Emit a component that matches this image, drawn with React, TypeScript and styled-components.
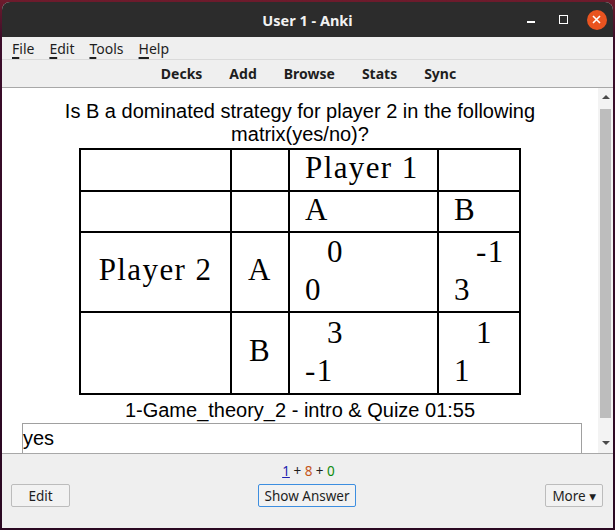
import React, { FC } from 'react';
import styled, { createGlobalStyle } from 'styled-components';

const GlobalStyle = createGlobalStyle`
	html,
	body {
		margin: 0;
		padding: 0;
		background: linear-gradient(180deg, #6e1b2c 0px, #3b0d2a 40px, #2a0822 100%);
		height: 530px;
		overflow: hidden;
	}
`;

const uiFont = `'Noto Sans', 'DejaVu Sans', sans-serif`;
const cardFont = `'Liberation Sans', Arial, sans-serif`;
const texFont = `'Liberation Serif', 'Times New Roman', serif`;

const Window = styled.div`
	width: 611px;
	height: 526px;
	margin: 2px 0 0 2px;
	border-radius: 8px 8px 0 0;
	overflow: hidden;
	display: flex;
	flex-direction: column;
	background: #efefef;
	font-family: ${uiFont};
`;

const TitleBar = styled.div`
	height: 35px;
	flex: none;
	background: #2c2c2c;
	display: grid;
	grid-template-columns: 1fr auto 1fr;
	align-items: center;
`;

const Title = styled.div`
	grid-column: 2;
	color: #f2f2f2;
	font-weight: bold;
	font-size: 14.5px;
	padding-top: 1px;
`;

const Controls = styled.div`
	justify-self: end;
	display: flex;
	align-items: center;
	padding-right: 0;
`;

const ControlSlot = styled.div`
	width: 33px;
	height: 24px;
	display: flex;
	align-items: center;
	justify-content: center;
`;

const Minimize = styled.div`
	width: 8px;
	height: 1.5px;
	background: #ffffff;
	margin-top: 5px;
`;

const Maximize = styled.div`
	width: 7px;
	height: 7px;
	border: 1.5px solid #ffffff;
`;

const Close = styled.div`
	width: 20px;
	height: 20px;
	border-radius: 50%;
	background: #e95420;
	display: flex;
	align-items: center;
	justify-content: center;
`;

const MenuBar = styled.div`
	height: 22px;
	flex: none;
	display: flex;
	align-items: center;
	gap: 15px;
	padding-left: 10px;
	font-size: 14px;
	color: #1e1e1e;
	border-bottom: 1px solid #dadada;
`;

const MenuItem = styled.span`
	& u {
		text-decoration-thickness: 2px;
		text-underline-offset: 3px;
	}
`;

const Toolbar = styled.div`
	height: 27px;
	flex: none;
	display: flex;
	align-items: center;
	justify-content: center;
	gap: 27px;
	padding-left: 2px;
	font-size: 14px;
	font-weight: bold;
	color: #1e1e1e;
	border-bottom: 1px solid #a8a8a8;
`;

const WebView = styled.div`
	flex: 1;
	display: flex;
	min-height: 0;
	background: #ffffff;
`;

const Card = styled.div`
	flex: 1;
	overflow: hidden;
	padding-top: 12px;
	font-family: ${cardFont};
	font-size: 20px;
	color: #000000;
	text-align: center;
`;

const Question = styled.div`
	line-height: 23px;
	max-width: 500px;
	margin: 0 auto;
`;

const Matrix = styled.div`
	display: grid;
	grid-template-columns: 149px 56px 147px 80px;
	grid-template-rows: 40px 39px 78px 80px;
	gap: 2px;
	padding: 2px;
	width: max-content;
	margin: 2px auto 0;
	background: #000000;
	font-family: ${texFont};
	font-size: 31px;
	letter-spacing: 1.4px;
	text-align: left;
`;

const Cell = styled.div<{ $center?: boolean }>`
	background: #ffffff;
	display: flex;
	align-items: center;
	justify-content: ${({ $center }) => ($center ? 'center' : 'flex-start')};
	padding-left: ${({ $center }) => ($center ? '0' : '15px')};
	padding-bottom: 4px;
	line-height: 34px;
`;

const PayoffCell = styled.div`
	background: #ffffff;
	display: flex;
	flex-direction: column;
	justify-content: center;
	padding-left: 15px;
	padding-bottom: 2px;
	line-height: 38px;
`;

const PayoffTop = styled.span`
	padding-left: 22px;
`;

const Caption = styled.div`
	margin-top: 4px;
	line-height: 23px;
`;

const AnswerInput = styled.div`
	margin: 1px 0 0 20px;
	width: 558px;
	height: 32px;
	border: 1px solid #a0a0a0;
	text-align: left;
	padding-left: 0;
	line-height: 28px;
`;

const Scrollbar = styled.div`
	width: 15px;
	flex: none;
	background: #f3f3f3;
	display: flex;
	flex-direction: column;
	align-items: center;
`;

const Arrow = styled.div<{ $down?: boolean }>`
	width: 0;
	height: 0;
	border-left: 4px solid transparent;
	border-right: 4px solid transparent;
	${({ $down }) =>
		$down ? 'border-top: 4px solid #4a4a4a;' : 'border-bottom: 4px solid #4a4a4a;'}
	margin: ${({ $down }) => ($down ? '0 0 8px' : '7px 0 0')};
`;

const Thumb = styled.div`
	width: 11px;
	margin: 10px 0 auto;
	height: 309px;
	background: #bdbdbd;
`;

const BottomBar = styled.div`
	height: 74px;
	flex: none;
	border-top: 1px solid #a8a8a8;
	display: flex;
	flex-direction: column;
	font-size: 13px;
	color: #1e1e1e;
`;

const Stats = styled.div`
	text-align: center;
	padding-top: 8px;
	line-height: 18px;
	font-size: 13.5px;
	padding-left: 2px;
`;

const Count = styled.span<{ $color: string; $underline?: boolean }>`
	color: ${({ $color }) => $color};
	text-decoration: ${({ $underline }) => ($underline ? 'underline' : 'none')};
`;

const ButtonRow = styled.div`
	display: grid;
	grid-template-columns: 1fr auto 1fr;
	align-items: center;
	padding: 0 10px 0 9px;
	margin-top: 4px;
`;

const Button = styled.div<{ $primary?: boolean; $align?: string; $pad?: number }>`
	justify-self: ${({ $align }) => $align || 'center'};
	height: 21px;
	padding: 0 ${({ $pad }) => $pad ?? 9}px;
	min-width: ${({ $primary }) => ($primary ? '0' : '39px')};
	display: flex;
	align-items: center;
	justify-content: center;
	border: 1px solid ${({ $primary }) => ($primary ? '#3d8ee0' : '#bcbcbc')};
	border-radius: 2px;
	background: #f2f2f2;
	font-size: 13.5px;
	color: #1e1e1e;
`;

const menus = [
	['F', 'ile'],
	['E', 'dit'],
	['T', 'ools'],
	['H', 'elp'],
];

const tools = ['Decks', 'Add', 'Browse', 'Stats', 'Sync'];

const App: FC = () => {
	return (
		<>
			<GlobalStyle />
			<Window>
				<TitleBar>
					<Title>User 1 - Anki</Title>
					<Controls>
						<ControlSlot>
							<Minimize />
						</ControlSlot>
						<ControlSlot>
							<Maximize />
						</ControlSlot>
						<ControlSlot>
							<Close>
								<svg width="9" height="9" viewBox="0 0 9 9">
									<path d="M1 1 L8 8 M8 1 L1 8" stroke="#fff" strokeWidth="1.6" />
								</svg>
							</Close>
						</ControlSlot>
					</Controls>
				</TitleBar>
				<MenuBar>
					{menus.map(([key, rest]) => (
						<MenuItem key={key}>
							<u>{key}</u>
							{rest}
						</MenuItem>
					))}
				</MenuBar>
				<Toolbar>
					{tools.map((t) => (
						<span key={t}>{t}</span>
					))}
				</Toolbar>
				<WebView>
					<Card>
						<Question>Is B a dominated strategy for player 2 in the following matrix(yes/no)?</Question>
						<Matrix>
							<Cell />
							<Cell />
							<Cell>Player 1</Cell>
							<Cell />

							<Cell />
							<Cell />
							<Cell>A</Cell>
							<Cell>B</Cell>

							<Cell $center>Player 2</Cell>
							<Cell $center>A</Cell>
							<PayoffCell>
								<PayoffTop>0</PayoffTop>
								<span>0</span>
							</PayoffCell>
							<PayoffCell>
								<PayoffTop>-1</PayoffTop>
								<span>3</span>
							</PayoffCell>

							<Cell />
							<Cell $center>B</Cell>
							<PayoffCell>
								<PayoffTop>3</PayoffTop>
								<span>-1</span>
							</PayoffCell>
							<PayoffCell>
								<PayoffTop>1</PayoffTop>
								<span>1</span>
							</PayoffCell>
						</Matrix>
						<Caption>1-Game_theory_2 - intro &amp; Quize 01:55</Caption>
						<AnswerInput>yes</AnswerInput>
					</Card>
					<Scrollbar>
						<Arrow />
						<Thumb />
						<Arrow $down />
					</Scrollbar>
				</WebView>
				<BottomBar>
					<Stats>
						<Count $color="#1f1fb0" $underline>
							1
						</Count>
						{' + '}
						<Count $color="#c4561c">8</Count>
						{' + '}
						<Count $color="#0b8a0b">0</Count>
					</Stats>
					<ButtonRow>
						<Button $align="start">Edit</Button>
						<Button $primary $pad={5}>
							Show Answer
						</Button>
						<Button $align="end" $pad={6}>
							More ▾
						</Button>
					</ButtonRow>
				</BottomBar>
			</Window>
		</>
	);
};

export default App;
